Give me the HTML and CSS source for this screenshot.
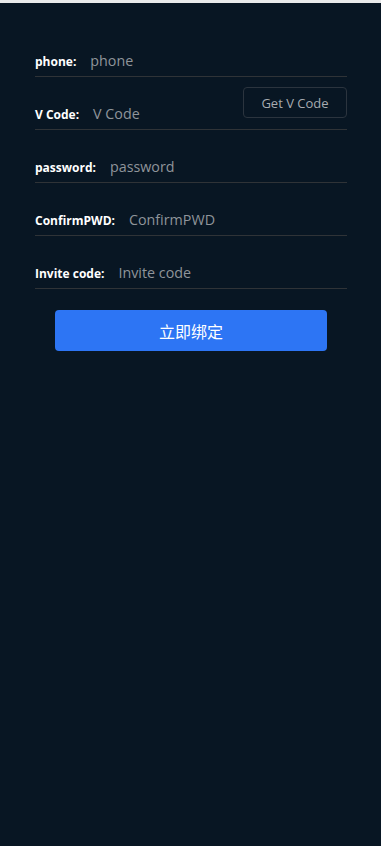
FILE: index.html
```html
<!DOCTYPE html>
<html>
<head>
<meta charset="utf-8">
<link rel="stylesheet" href="styles.css">
</head>
<body>
<div class="topbar"></div>
<div class="form">
  <div class="row"><div class="field"><span class="label">phone:</span><span class="ph">phone</span></div></div>
  <div class="row"><div class="field"><span class="label">V Code:</span><span class="ph">V Code</span></div><span class="getcode">Get V Code</span></div>
  <div class="row"><div class="field"><span class="label">password:</span><span class="ph">password</span></div></div>
  <div class="row"><div class="field"><span class="label">ConfirmPWD:</span><span class="ph">ConfirmPWD</span></div></div>
  <div class="row"><div class="field"><span class="label">Invite code:</span><span class="ph">Invite code</span></div></div>
  <div class="btnwrap"><div class="submit">立即绑定</div></div>
</div>
</body>
</html>
```
FILE: styles.css
```css
html, body { margin: 0; padding: 0; }
body {
  background: #081623;
  height: 846px;
  font-family: "Open Sans", "Noto Sans", sans-serif;
}
.topbar { height: 3px; background: #e9eaeb; }
.form { padding: 21px 34px 0 35px; }
.row {
  display: flex;
  align-items: flex-end;
  height: 49px;
  padding-bottom: 3px;
  border-bottom: 1px solid #2f3337;
}
.field {
  flex: 1;
  display: flex;
  align-items: baseline;
  line-height: 22px;
}
.label {
  color: #ffffff;
  font-size: 12px;
  font-weight: 700;
  margin-right: 14px;
  white-space: nowrap;
}
.ph {
  color: #8f949a;
  font-size: 14.3px;
  white-space: nowrap;
}
.getcode {
  align-self: flex-start;
  margin-top: 10px;
  width: 102px;
  height: 29px;
  border: 1px solid #2b343e;
  border-radius: 4px;
  color: #a7abb0;
  font-size: 13px;
  display: flex;
  align-items: center;
  justify-content: center;
}
.btnwrap { display: flex; justify-content: center; padding: 21px 20px 0 20px; }
.submit {
  width: 273px;
  height: 41px;
  background: #2d75f4;
  border-radius: 4px;
  color: #fff;
  font-size: 16px;
  display: flex;
  align-items: center;
  justify-content: center;
  font-family: "Noto Sans CJK SC", sans-serif;
}
```
